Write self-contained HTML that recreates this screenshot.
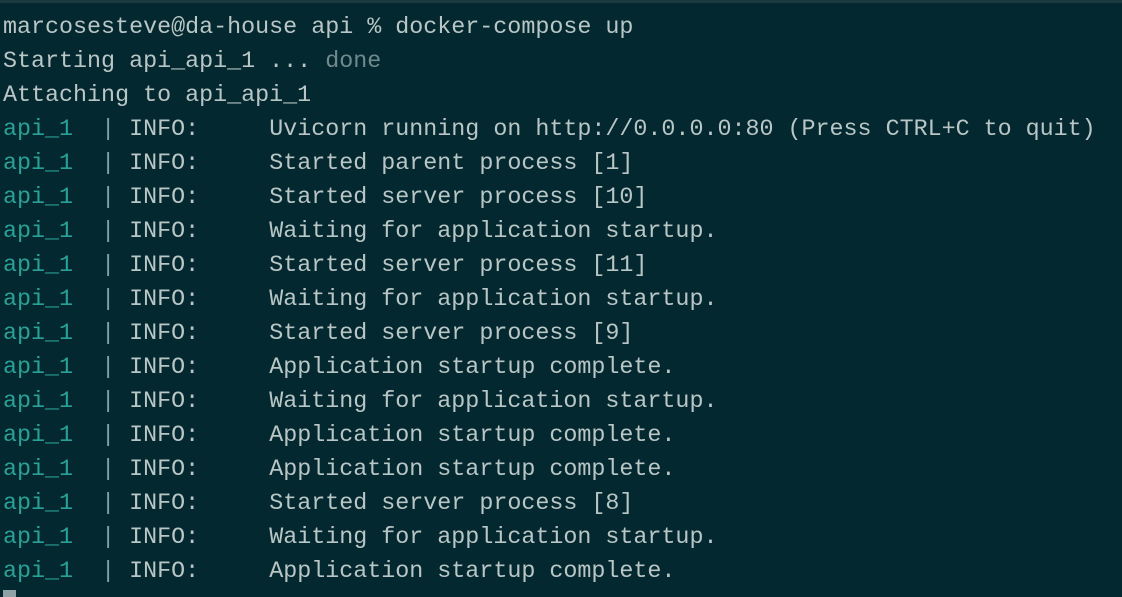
<!DOCTYPE html>
<html><head><style>
html,body{margin:0;padding:0;}
body{width:1122px;height:594px;background:#04282f;overflow:hidden;position:relative;border-top:3px solid #1b3a40;box-sizing:border-box;}
pre{margin:0;position:absolute;left:3px;top:8px;font-family:"Liberation Mono",monospace;font-size:23.35px;line-height:34px;color:#b9c6c6;}
.c{color:#2aa198;}
.p{color:#7fa3a3;}
.d{color:#6f8a8c;}
.cur{position:absolute;left:3px;top:587px;width:13px;height:7px;background:#8fa3a6;}
</style></head><body>
<pre>marcosesteve@da-house api % docker-compose up
Starting api_api_1 ... <span class="d">done</span>
Attaching to api_api_1
<span class="c">api_1</span>  <span class="p">|</span> INFO:     Uvicorn running on http://0.0.0.0:80 (Press CTRL+C to quit)
<span class="c">api_1</span>  <span class="p">|</span> INFO:     Started parent process [1]
<span class="c">api_1</span>  <span class="p">|</span> INFO:     Started server process [10]
<span class="c">api_1</span>  <span class="p">|</span> INFO:     Waiting for application startup.
<span class="c">api_1</span>  <span class="p">|</span> INFO:     Started server process [11]
<span class="c">api_1</span>  <span class="p">|</span> INFO:     Waiting for application startup.
<span class="c">api_1</span>  <span class="p">|</span> INFO:     Started server process [9]
<span class="c">api_1</span>  <span class="p">|</span> INFO:     Application startup complete.
<span class="c">api_1</span>  <span class="p">|</span> INFO:     Waiting for application startup.
<span class="c">api_1</span>  <span class="p">|</span> INFO:     Application startup complete.
<span class="c">api_1</span>  <span class="p">|</span> INFO:     Application startup complete.
<span class="c">api_1</span>  <span class="p">|</span> INFO:     Started server process [8]
<span class="c">api_1</span>  <span class="p">|</span> INFO:     Waiting for application startup.
<span class="c">api_1</span>  <span class="p">|</span> INFO:     Application startup complete.</pre>
<div class="cur"></div>
</body></html>
